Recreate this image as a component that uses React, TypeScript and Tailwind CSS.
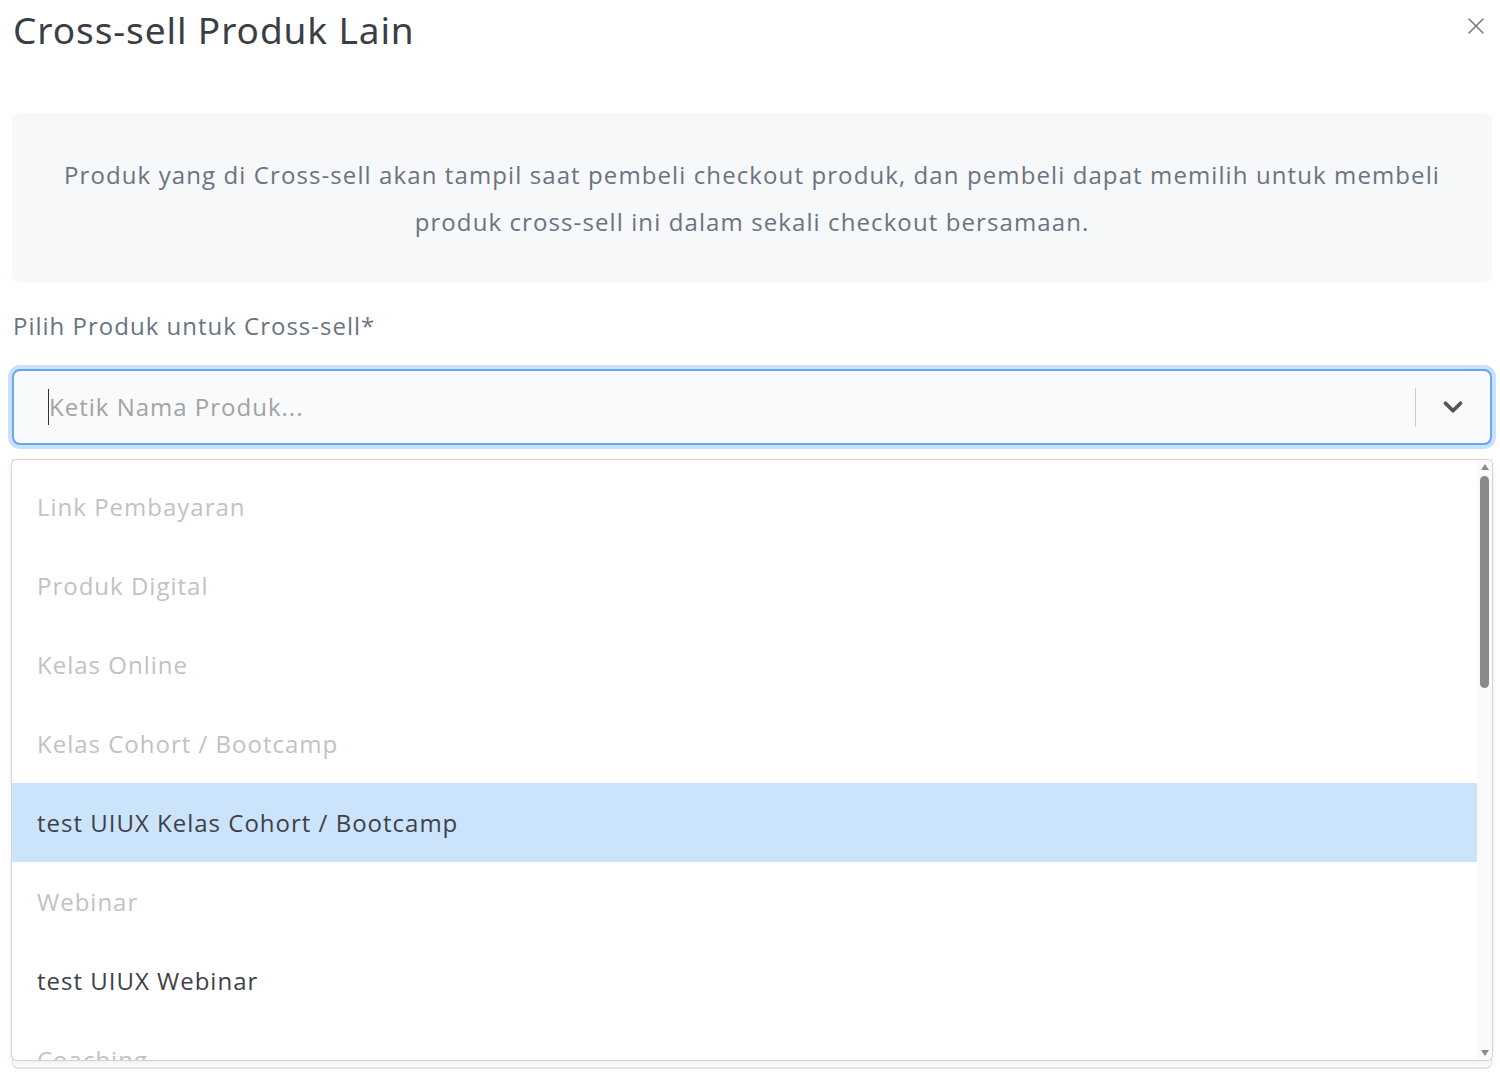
import { X, ChevronDown } from "lucide-react";

// Options in the open product picker. Category headers are disabled,
// real products are selectable.
type Option = { label: string; disabled?: boolean; active?: boolean };

const options: Option[] = [
  { label: "Link Pembayaran", disabled: true },
  { label: "Produk Digital", disabled: true },
  { label: "Kelas Online", disabled: true },
  { label: "Kelas Cohort / Bootcamp", disabled: true },
  { label: "test UIUX Kelas Cohort / Bootcamp", active: true },
  { label: "Webinar", disabled: true },
  { label: "test UIUX Webinar" },
  { label: "Coaching", disabled: true },
];

export default function App() {
  return (
    <div
      className="min-h-[1081px] w-[1500px] bg-white pl-3 pr-2 text-[#3d4149]"
      style={{ fontFamily: '"Open Sans", "Noto Sans", sans-serif' }}
    >
      <header className="flex items-start justify-between">
        <h1
          className="pl-px pt-[6px] text-[37px] leading-[48px] tracking-[0.9px] text-[#3a3e45]"
          style={{ fontFamily: '"Noto Sans", "Open Sans", sans-serif' }}
        >
          Cross-sell Produk Lain
        </h1>
        <button type="button" className="mr-[2px] mt-[12px] text-[#7a7a7a]">
          <X size={28} strokeWidth={1.3} />
        </button>
      </header>

      <section className="mt-[59px] flex h-[169px] items-center justify-center rounded-md bg-[#f6f8fa] px-6 text-center text-[24px] leading-[47px] tracking-[1.1px] text-[#6b7380]">
        <p>
          Produk yang di Cross-sell akan tampil saat pembeli checkout produk, dan pembeli dapat memilih untuk membeli
          <br />
          produk cross-sell ini dalam sekali checkout bersamaan.
        </p>
      </section>

      <label className="mt-[28px] block pl-px text-[24px] leading-[32px] tracking-[1px] text-[#6b7380]">
        Pilih Produk untuk Cross-sell*
      </label>

      <div className="mt-[27px] flex h-[76px] items-center rounded-lg border-2 border-[#64a8f4] bg-[#f9fafb] shadow-[0_0_0_4px_#c9e1fc]">
        <div className="flex flex-1 items-center pl-[34px]">
          <span className="h-[36px] w-px bg-[#333]" />
          <span className="text-[24px] tracking-[1px] text-[#a3a3a3]">Ketik Nama Produk...</span>
        </div>
        <span className="h-[39px] w-px bg-[#cccccc]" />
        <span className="flex w-[74px] items-center justify-center text-[#555]">
          <ChevronDown size={30} strokeWidth={3} />
        </span>
      </div>

      <div className="relative mt-[14px] h-[610px] rounded-b-md border-x border-b-2 border-[#e1e5ea]">
        <div className="absolute -left-[2px] -right-[2px] top-0 flex h-[602px] overflow-hidden rounded-md border border-[#d3d3d3] bg-white shadow-[0_2px_6px_rgba(0,0,0,0.08)]">
          <ul className="flex-1 pt-[7px]">
            {options.map((o) => (
              <li
                key={o.label}
                className={`flex h-[79px] items-center pl-[25px] text-[24px] tracking-[1px] ${
                  o.active
                    ? "bg-[#cce4fb] text-[#3d4149]"
                    : o.disabled
                      ? "text-[#c2c2c2]"
                      : "text-[#3d4149]"
                }`}
              >
                {o.label}
              </li>
            ))}
          </ul>
          <div className="flex w-[15px] flex-col items-center bg-[#fafafa] py-[4px]">
            <span className="h-0 w-0 border-x-[4px] border-b-[6px] border-x-transparent border-b-[#8a8a8a]" />
            <span className="mt-[6px] h-[212px] w-[9px] rounded-full bg-[#8a8a8a]" />
            <span className="flex-1" />
            <span className="h-0 w-0 border-x-[4px] border-t-[6px] border-x-transparent border-t-[#8a8a8a]" />
          </div>
        </div>
      </div>
    </div>
  );
}
